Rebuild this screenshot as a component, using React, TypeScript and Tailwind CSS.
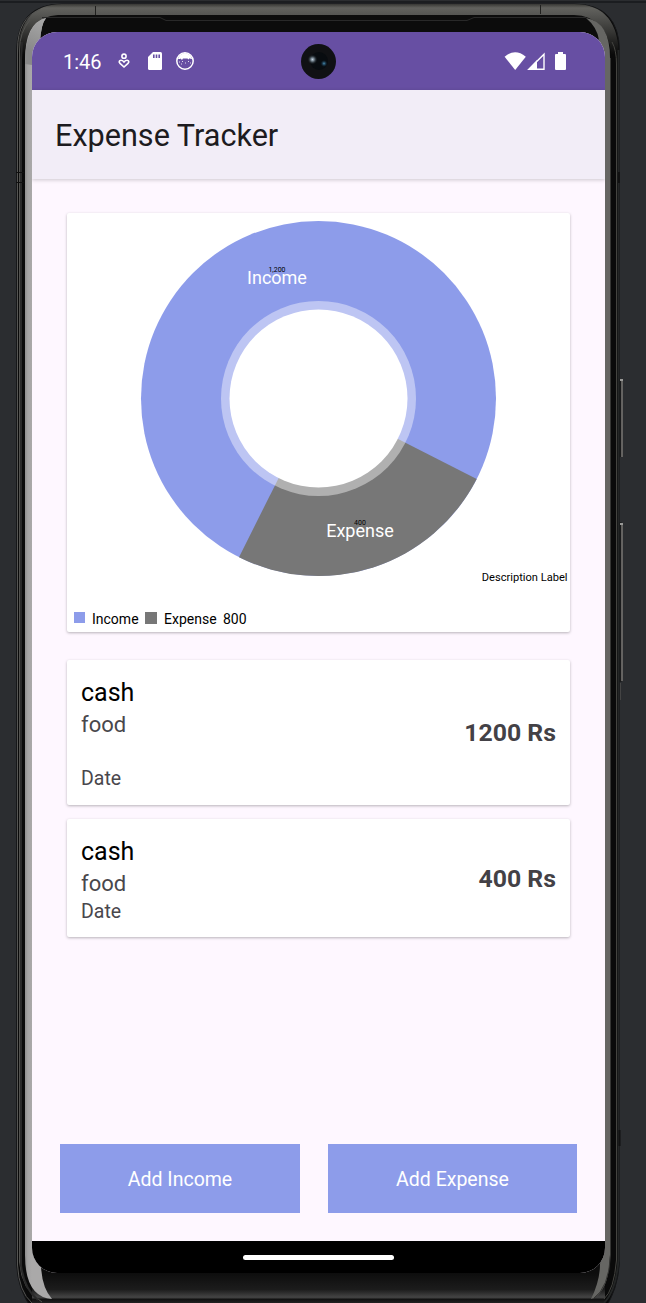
import React from "react";

function DeviceFrame() {
  return (
    <svg className="absolute inset-0" width="646" height="1303" viewBox="0 0 646 1303" fill="none" aria-hidden="true">
      <defs>
        <linearGradient id="rim" x1="0" y1="4" x2="0" y2="60" gradientUnits="userSpaceOnUse">
          <stop offset="0" stopColor="#373734" />
          <stop offset="0.07" stopColor="#62625e" />
          <stop offset="0.2" stopColor="#555552" />
          <stop offset="0.5" stopColor="#363634" />
          <stop offset="0.9" stopColor="#0a0a0a" />
        </linearGradient>
        <linearGradient id="glassLeft" x1="25" y1="0" x2="32" y2="0" gradientUnits="userSpaceOnUse">
          <stop offset="0" stopColor="#8f8e8e" />
          <stop offset="0.4" stopColor="#a4a3a3" />
          <stop offset="1" stopColor="#aaa9a9" />
        </linearGradient>
        <linearGradient id="cornerLeft" x1="27" y1="50" x2="44" y2="17" gradientUnits="userSpaceOnUse">
          <stop offset="0" stopColor="#888" />
          <stop offset="1" stopColor="#aaa" />
        </linearGradient>
        <linearGradient id="chin" x1="0" y1="1273" x2="0" y2="1303" gradientUnits="userSpaceOnUse">
          <stop offset="0" stopColor="#0d0d0d" />
          <stop offset="0.55" stopColor="#1c1c1c" />
          <stop offset="0.81" stopColor="#454545" />
          <stop offset="0.88" stopColor="#111" />
          <stop offset="1" stopColor="#222" />
        </linearGradient>
      </defs>
      <path d="M0 2H646" stroke="#1b1d20" strokeWidth="2" />
      <path d="M16.500 1262V52Q17 4 62 4H574Q619.500 4 619.500 52V1262Q618 1290 604 1310H33Q17 1290 16.500 1262Z" fill="#0a0a0a" stroke="#161719" />
      <path d="M17 60Q17 4 62 4H574Q619 4 619 58L611 54Q608 16 572 16H62Q26 16 24 60Z" fill="url(#rim)" />
      <path d="M95.500 6V15M540.500 5V14" stroke="#20201e" />
      <path d="M25 60Q27 16 58 15H574Q607 16 611 56V1270H25Z" fill="#0c0c0c" />
      <path d="M42 17.500H160L166 20.500H467L474 17.500H586" stroke="#292929" />
      <path d="M32 1262H605V1303H32Z" fill="url(#chin)" />
      <path d="M40 9.500Q17.500 18 17.500 50V1265Q19 1292 32 1303" stroke="#555553" />
      <path d="M30 20Q19.500 32 19.500 50V1262Q22 1291 42 1302" stroke="#535350" />
      <path d="M22 42L21 60V1265Q24 1289 38 1300" stroke="#292929" strokeWidth="2" />
      <path d="M25 60Q25 23 46 18Q41 24 40 42L32 65V1240L41 1266Q42 1288 52 1299Q25 1297 25 1255Z" fill="url(#glassLeft)" />
      <path d="M25 64Q25 23 46 18Q41 24 40 42L32 65Z" fill="url(#cornerLeft)" />
      <path d="M586 18Q610 22 610 58V1255Q609 1293 591 1299Q600 1281 600 1264L605 1240V65L599 40Q597 27 586 18Z" fill="#666663" />
      <path d="M610.500 58V1255Q609 1288 593 1299" stroke="#353533" />
      <path d="M612 42Q616.500 50 616.500 64V1260Q614 1290 604 1299" stroke="#444440" />
      <path d="M618.500 50V1260Q616 1291 604 1303" stroke="#242626" strokeWidth="2" />
      <path d="M16 172.500H24M16 182.500H24" stroke="#101010" />
      <path d="M619 172V183M619.500 1130V1146" stroke="#111" strokeWidth="2" />
      <path d="M620.500 379V457M620.500 522V682" stroke="#191a1b" strokeWidth="2" />
      <path d="M622 379V457M622 523V681" stroke="#797773" strokeWidth="1.500" />
      <path d="M620.500 683V700" stroke="#444" />
      <path d="M620 380H623M620 524H623" stroke="#999997" strokeWidth="2" />
    </svg>
  );
}

function StatusBar() {
  return (
    <header className="flex h-[58px] shrink-0 items-center justify-between bg-[#674fa3] pl-[31px] pr-[39px] text-white">
      <div className="flex items-center">
        <span className="w-[54px] pt-px text-[20px] leading-6">1:46</span>
        <svg width="14" height="18" viewBox="0 0 14 18" fill="none" stroke="currentColor" strokeWidth="1.6">
          <circle cx="7" cy="4.200" r="2.100" />
          <path d="M7 15 3 11.300C1.500 9.900 2.300 8.200 3.900 8.200Q5.600 8.200 7 10Q8.400 8.200 10.100 8.200C11.700 8.200 12.500 9.900 11 11.300Z" />
        </svg>
        <svg className="ml-[17px]" width="14" height="18" viewBox="0 0 14 18">
          <path d="M5 0H12.500Q14 0 14 1.500V16.500Q14 18 12.500 18H1.500Q0 18 0 16.500V5Z" fill="white" />
          <path d="M5.800 2.500V6M8.500 2.500V6M11.200 2.500V6" stroke="#674fa3" strokeWidth="1.600" />
        </svg>
        <svg className="ml-[14px]" width="18" height="18" viewBox="0 0 18 18">
          <circle cx="9" cy="9" r="8.200" fill="none" stroke="white" strokeWidth="1.500" />
          <path d="M2 7Q3 2 9 1Q15 2 16 7H14.500L14 6L12.500 7.500L11.500 6.500H7L6 8L4.500 6.500L4 7Z" fill="white" />
          <path d="M3 10h1M5 12h1M12 9.500h1M14 11h1M9 11h1M6 9.500h1" stroke="white" strokeWidth=".8" />
        </svg>
      </div>
      <div className="flex items-center">
        <svg width="22" height="18" viewBox="0 0 22 18" fill="white"><path d="M.600 4.700Q11-4 21.800 4.700L11.200 18Z" /></svg>
        <svg className="ml-[1px]" width="18" height="18" viewBox="0 0 18 18">
          <path d="M1.900 17.200H17V2.200Z" fill="none" stroke="white" strokeWidth="1.400" />
          <path d="M.500 18H10V8Z" fill="white" />
        </svg>
        <svg className="ml-[10px]" width="11" height="18" viewBox="0 0 11 18" fill="white"><path d="M3 0H8V2H10Q11 2 11 3V17Q11 18 10 18H1Q0 18 0 17V3Q0 2 1 2H3Z" /></svg>
      </div>
    </header>
  );
}

function Camera() {
  return (
    <svg className="absolute left-[301px] top-[44px]" width="35" height="35" viewBox="0 0 35 35" aria-hidden="true">
      <defs>
        <radialGradient id="glint"><stop offset="0" stopColor="#c5d2df" /><stop offset=".35" stopColor="#71808b" /><stop offset="1" stopColor="#151c21" stopOpacity="0" /></radialGradient>
        <radialGradient id="blueGlint"><stop offset="0" stopColor="#4b91b6" /><stop offset="1" stopColor="#0b2840" stopOpacity="0" /></radialGradient>
      </defs>
      <circle cx="17.500" cy="17.500" r="17.500" fill="#101114" />
      <circle cx="18" cy="17" r="9" fill="#080c10" />
      <circle cx="11.500" cy="15.500" r="5" fill="url(#glint)" />
      <circle cx="23" cy="19.500" r="3.500" fill="url(#blueGlint)" />
    </svg>
  );
}

const cardClass = "rounded-[2px] bg-white shadow-[0_1px_3px_rgba(0,0,0,0.28)]";

function ExpenseChart() {
  return (
    <section className={`${cardClass} flex h-[419px] flex-col`}>
      <svg className="shrink-0" width="503" height="390" viewBox="67 213 503 390" fontFamily="Roboto, sans-serif">
        <circle cx="318.500" cy="398.500" r="177.500" fill="#8d9cea" />
        <path d="M318.500 398.500L476.700 479.100A177.500 177.500 0 0 1 239 557.200Z" fill="#777" />
        <circle cx="318.500" cy="398.500" r="97.500" fill="white" fillOpacity=".42" />
        <circle cx="318.500" cy="398.500" r="89" fill="white" />
        <g textAnchor="middle">
          <text x="277" y="272" fontSize="7" fill="black">1,200</text>
          <text x="277" y="284" fontSize="18" fill="white">Income</text>
          <text x="360" y="525" fontSize="7" fill="black">400</text>
          <text x="360" y="537" fontSize="18" fill="white">Expense</text>
        </g>
        <text x="567.500" y="581.300" textAnchor="end" fontSize="11.100" fill="black">Description Label</text>
      </svg>
      <div className="flex h-[31px] items-center pl-[7px] text-[14px] leading-4 text-black">
        <span className="h-[11px] w-[11px] bg-[#8d9cea]" />
        <span className="ml-[7px] w-[53px] pt-[2px]">Income</span>
        <span className="h-[12px] w-[12px] bg-[#777]" />
        <span className="ml-[7px] w-[59px] pt-[2px]">Expense</span>
        <span className="pt-[2px]">800</span>
      </div>
    </section>
  );
}

function Transaction({ amount, spaced = false }: { amount: string; spaced?: boolean }) {
  return (
    <article className={`${cardClass} flex items-center justify-between px-[14px] ${spaced ? "h-[145px]" : "h-[118px]"}`}>
      <div className="flex h-full flex-col pt-[18px] text-[#49474c]">
        <h2 className="text-[25px] leading-[30px] text-black">cash</h2>
        <p className="pt-[4px] text-[22px] leading-[26px]">food</p>
        <p className={`${spaced ? "pt-[29px]" : "pt-[3px]"} text-[19.5px] leading-6`}>Date</p>
      </div>
      <strong className="pt-[1px] text-[24.8px] leading-[30px] font-bold text-[#434146]">{amount}</strong>
    </article>
  );
}

export default function App() {
  return (
    <div className="relative h-[1303px] w-[646px] overflow-hidden bg-[#2b2d30] font-['Roboto',sans-serif]">
      <DeviceFrame />
      <div className="relative flex h-full pl-[32px] pt-[32px]">
        <div className="flex h-[1241px] w-[573px] flex-col overflow-hidden rounded-[25px] bg-[#fef7ff]">
          <StatusBar />
          <div className="relative flex h-[89px] shrink-0 items-center bg-[#f2edf7] pl-[23px] shadow-[0_1px_4px_rgba(0,0,0,0.2)]">
            <h1 className="pt-[3px] text-[30.6px] leading-9 text-[#1d1b20]">Expense Tracker</h1>
          </div>
          <main className="flex grow flex-col">
            <div className="mx-[35px] pt-[34px]">
              <ExpenseChart />
              <div className="mt-[28px] flex flex-col gap-[14px]">
                <Transaction amount="1200 Rs" spaced />
                <Transaction amount="400 Rs" />
              </div>
            </div>
            <div className="mt-auto mb-[28px] flex gap-[28px] px-[28px]">
              <button className="h-[69px] w-[240px] bg-[#8d9cea] pt-[3px] text-[19.5px] text-white">Add Income</button>
              <button className="h-[69px] w-[249px] bg-[#8d9cea] pt-[3px] text-[19.5px] text-white">Add Expense</button>
            </div>
          </main>
          <footer className="flex h-[32px] shrink-0 items-center justify-center bg-black">
            <div className="h-[5px] w-[151px] rounded-full bg-white" />
          </footer>
        </div>
      </div>
      <Camera />
    </div>
  );
}
